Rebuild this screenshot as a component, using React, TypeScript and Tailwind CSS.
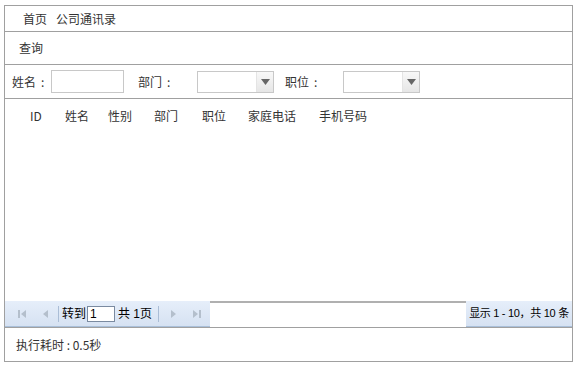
import React from 'react';

const font = { fontFamily: '"Noto Sans CJK SC", "Noto Sans", sans-serif' };
const pagerFont = { fontFamily: '"Liberation Sans", "Noto Sans CJK SC", sans-serif' };

const SelectBox: React.FC = () => (
  <div className="flex h-[22px] w-[77px] border border-[#c8c8c8] bg-white">
    <div className="flex-1" />
    <div className="flex w-[17px] items-center justify-center border-l border-[#e4e4e4] bg-gradient-to-b from-[#f8f8f8] to-[#e6e6e6]">
      <svg width="9" height="6" viewBox="0 0 9 6">
        <path d="M0 0 H9 L4.5 6 Z" fill="#666" />
      </svg>
    </div>
  </div>
);

const PagerIcon: React.FC<{ kind: 'first' | 'prev' | 'next' | 'last' }> = ({ kind }) => {
  const c = '#b4bfcc';
  return (
    <svg width="10" height="10" viewBox="0 0 10 10">
      {kind === 'first' && (
        <>
          <rect x="1" y="1" width="2" height="8" fill={c} />
          <path d="M9 1 V9 L4 5 Z" fill={c} />
        </>
      )}
      {kind === 'prev' && <path d="M7 1 V9 L2 5 Z" fill={c} />}
      {kind === 'next' && <path d="M3 1 V9 L8 5 Z" fill={c} />}
      {kind === 'last' && (
        <>
          <path d="M1 1 V9 L6 5 Z" fill={c} />
          <rect x="7" y="1" width="2" height="8" fill={c} />
        </>
      )}
    </svg>
  );
};

// label with a centred colon, like the original page's full-width one
const Label: React.FC<{ text: string; className: string }> = ({ text, className }) => (
  <span className={className}>
    {text}
    <span className="ml-[5px]">:</span>
  </span>
);

export default function App() {
  return (
    <div className="h-[367px] w-[576px] bg-white text-[12px] text-[#333]" style={font}>
      <div className="ml-[4px] pt-[5px]">
        <div className="flex h-[357px] w-[569px] flex-col border border-[#a0a0a0]">
          <div className="flex h-[26px] items-center gap-[9px] border-b border-[#a0a0a0] pl-[18px]">
            <span>首页</span>
            <span>公司通讯录</span>
          </div>
          <div className="flex h-[33px] items-center border-b border-[#a0a0a0] pl-[14px]">
            <span>查询</span>
          </div>
          <div className="flex h-[34px] items-center border-b border-[#a0a0a0] pl-[7px]">
            <Label text="姓名" className="w-[39px]" />
            <div className="h-[23px] w-[73px] border border-[#c8c8c8] bg-white" />
            <Label text="部门" className="ml-[14px] w-[59px]" />
            <SelectBox />
            <Label text="职位" className="ml-[11px] w-[58px]" />
            <SelectBox />
          </div>
          <div className="flex-1">
            <div className="flex h-[34px] items-center pl-[25px]">
              <span className="w-[35px]">ID</span>
              <span className="w-[43px]">姓名</span>
              <span className="w-[46px]">性别</span>
              <span className="w-[48px]">部门</span>
              <span className="w-[46px]">职位</span>
              <span className="w-[71px]">家庭电话</span>
              <span>手机号码</span>
            </div>
          </div>
          <div className="flex h-[27px] border-b border-[#a0a0a0]" style={pagerFont}>
            <div className="flex h-[26px] w-[205px] items-center border-b border-[#a9bfd9] bg-gradient-to-b from-[#e6eefa] to-[#d6e2f2] pl-[6px]">
              <div className="flex w-[22px] justify-center"><PagerIcon kind="first" /></div>
              <div className="ml-[4px] flex w-[18px] justify-center"><PagerIcon kind="prev" /></div>
              <div className="ml-[3px] h-[16px] w-px bg-[#aabdd6]" />
              <span className="ml-[3px] text-black">转到</span>
              <div className="ml-[1px] flex h-[16px] w-[28px] items-center border border-[#7a8aa0] bg-white pl-[2px] text-[12px] leading-none text-black">1</div>
              <span className="ml-[3px] text-black">共 1页</span>
              <div className="ml-[6px] h-[16px] w-px bg-[#aabdd6]" />
              <div className="ml-[8px] flex w-[12px] justify-center"><PagerIcon kind="next" /></div>
              <div className="ml-[12px] flex w-[12px] justify-center"><PagerIcon kind="last" /></div>
            </div>
            <div className="flex-1 border-t-2 border-[#b0b0b0]" />
            <div className="flex h-[26px] w-[106px] items-center justify-center whitespace-nowrap border-b border-[#a9bfd9] bg-gradient-to-b from-[#e6eefa] to-[#d6e2f2] text-[11px] tracking-[-0.3px] text-black">
              显示 1 - 10，共 10 条
            </div>
          </div>
          <div className="flex h-[33px] items-center pl-[11px]">
            <span>执行耗时 : 0.5秒</span>
          </div>
        </div>
      </div>
    </div>
  );
}
